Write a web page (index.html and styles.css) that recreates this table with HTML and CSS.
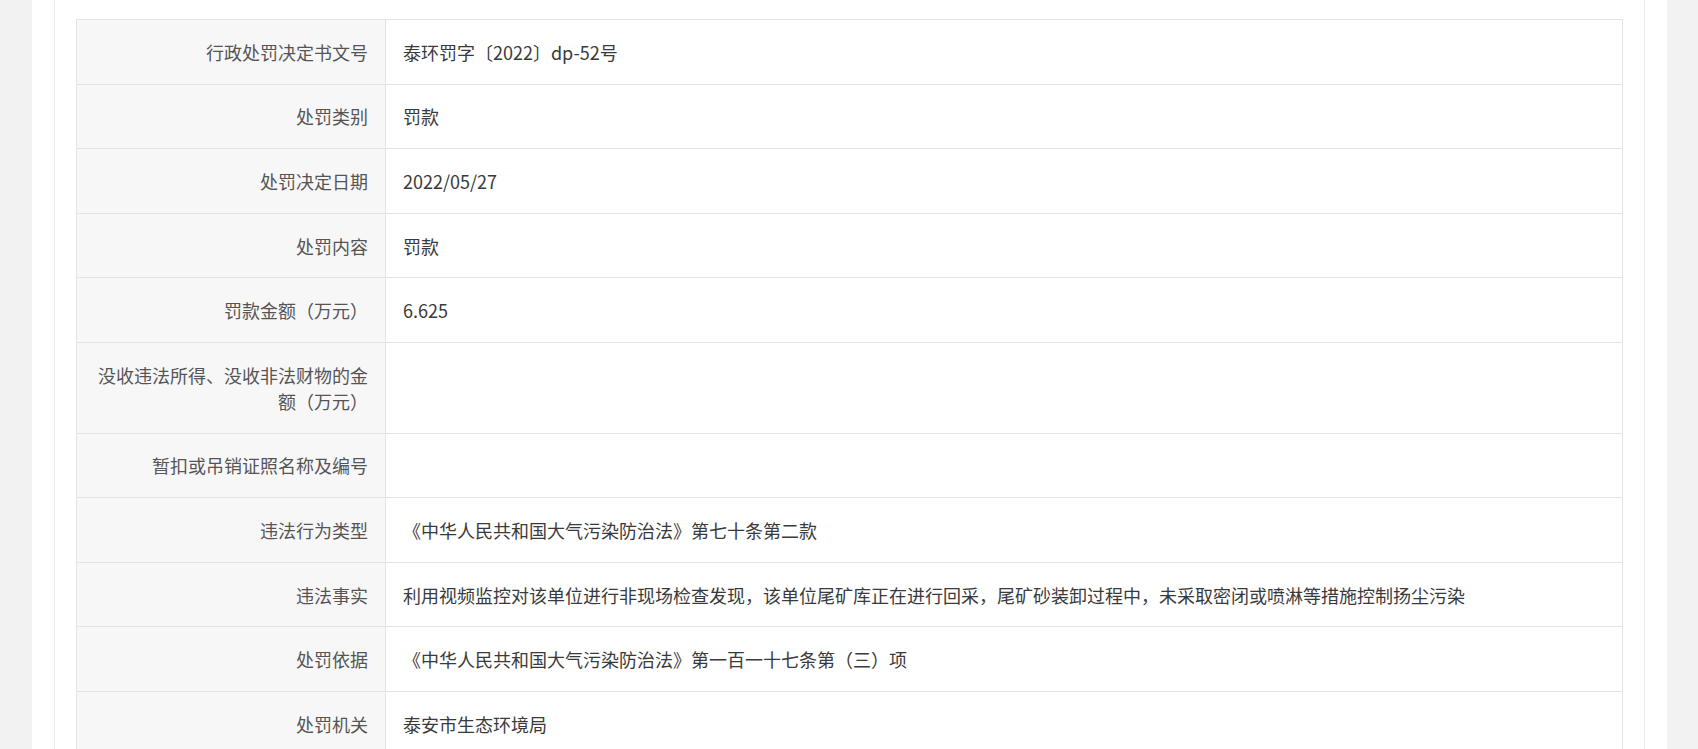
FILE: index.html
```html
<!DOCTYPE html>
<html lang="zh-CN">
<head>
    <meta charset="UTF-8">
    <meta name="viewport" content="width=device-width, initial-scale=1.0">
    <title>行政处罚信息</title>
    <link rel="stylesheet" href="styles.css">
</head>
<body>

    <div class="page">
        <div class="panel">
            <table class="info-table">
                <colgroup>
                    <col class="col-label">
                    <col>
                </colgroup>
                <tr>
                    <th>行政处罚决定书文号</th>
                    <td>泰环罚字〔2022〕dp-52号</td>
                </tr>
                <tr>
                    <th>处罚类别</th>
                    <td>罚款</td>
                </tr>
                <tr>
                    <th>处罚决定日期</th>
                    <td>2022/05/27</td>
                </tr>
                <tr>
                    <th>处罚内容</th>
                    <td>罚款</td>
                </tr>
                <tr>
                    <th>罚款金额（万元）</th>
                    <td>6.625</td>
                </tr>
                <tr>
                    <th>没收违法所得、没收非法财物的金额（万元）</th>
                    <td></td>
                </tr>
                <tr>
                    <th>暂扣或吊销证照名称及编号</th>
                    <td></td>
                </tr>
                <tr>
                    <th>违法行为类型</th>
                    <td>《中华人民共和国大气污染防治法》第七十条第二款</td>
                </tr>
                <tr>
                    <th>违法事实</th>
                    <td>利用视频监控对该单位进行非现场检查发现，该单位尾矿库正在进行回采，尾矿砂装卸过程中，未采取密闭或喷淋等措施控制扬尘污染</td>
                </tr>
                <tr>
                    <th>处罚依据</th>
                    <td>《中华人民共和国大气污染防治法》第一百一十七条第（三）项</td>
                </tr>
                <tr>
                    <th>处罚机关</th>
                    <td>泰安市生态环境局</td>
                </tr>
            </table>
        </div>
    </div>

</body>
</html>
```

FILE: styles.css
```css
body {
    background-color: #f3f2f3;
    margin: 0;
    padding: 0 0 0 32px;
    font-family: "Noto Sans CJK SC", "Microsoft YaHei", sans-serif;
    font-size: 18px;
    color: #333;
    overflow: hidden;
}

.page {
    background: #fff;
    width: 1635px;
    padding: 0 22px;
    box-sizing: border-box;
    min-height: 800px;
}

.panel {
    border-left: 1px solid #ebebeb;
    border-right: 1px solid #ebebeb;
    padding: 19px 21px 0 21px;
}

.info-table {
    width: 100%;
    border-collapse: collapse;
    table-layout: fixed;
}

.col-label {
    width: 309px;
}

.info-table th,
.info-table td {
    border: 1px solid #e3e3e3;
    padding: 18.8px 17px;
    line-height: 26px;
    vertical-align: middle;
}

.info-table th {
    background: #f8f7f8;
    color: #555;
    font-weight: normal;
    text-align: right;
}

.info-table td {
    text-align: left;
    color: #3a3a3a;
}
```
